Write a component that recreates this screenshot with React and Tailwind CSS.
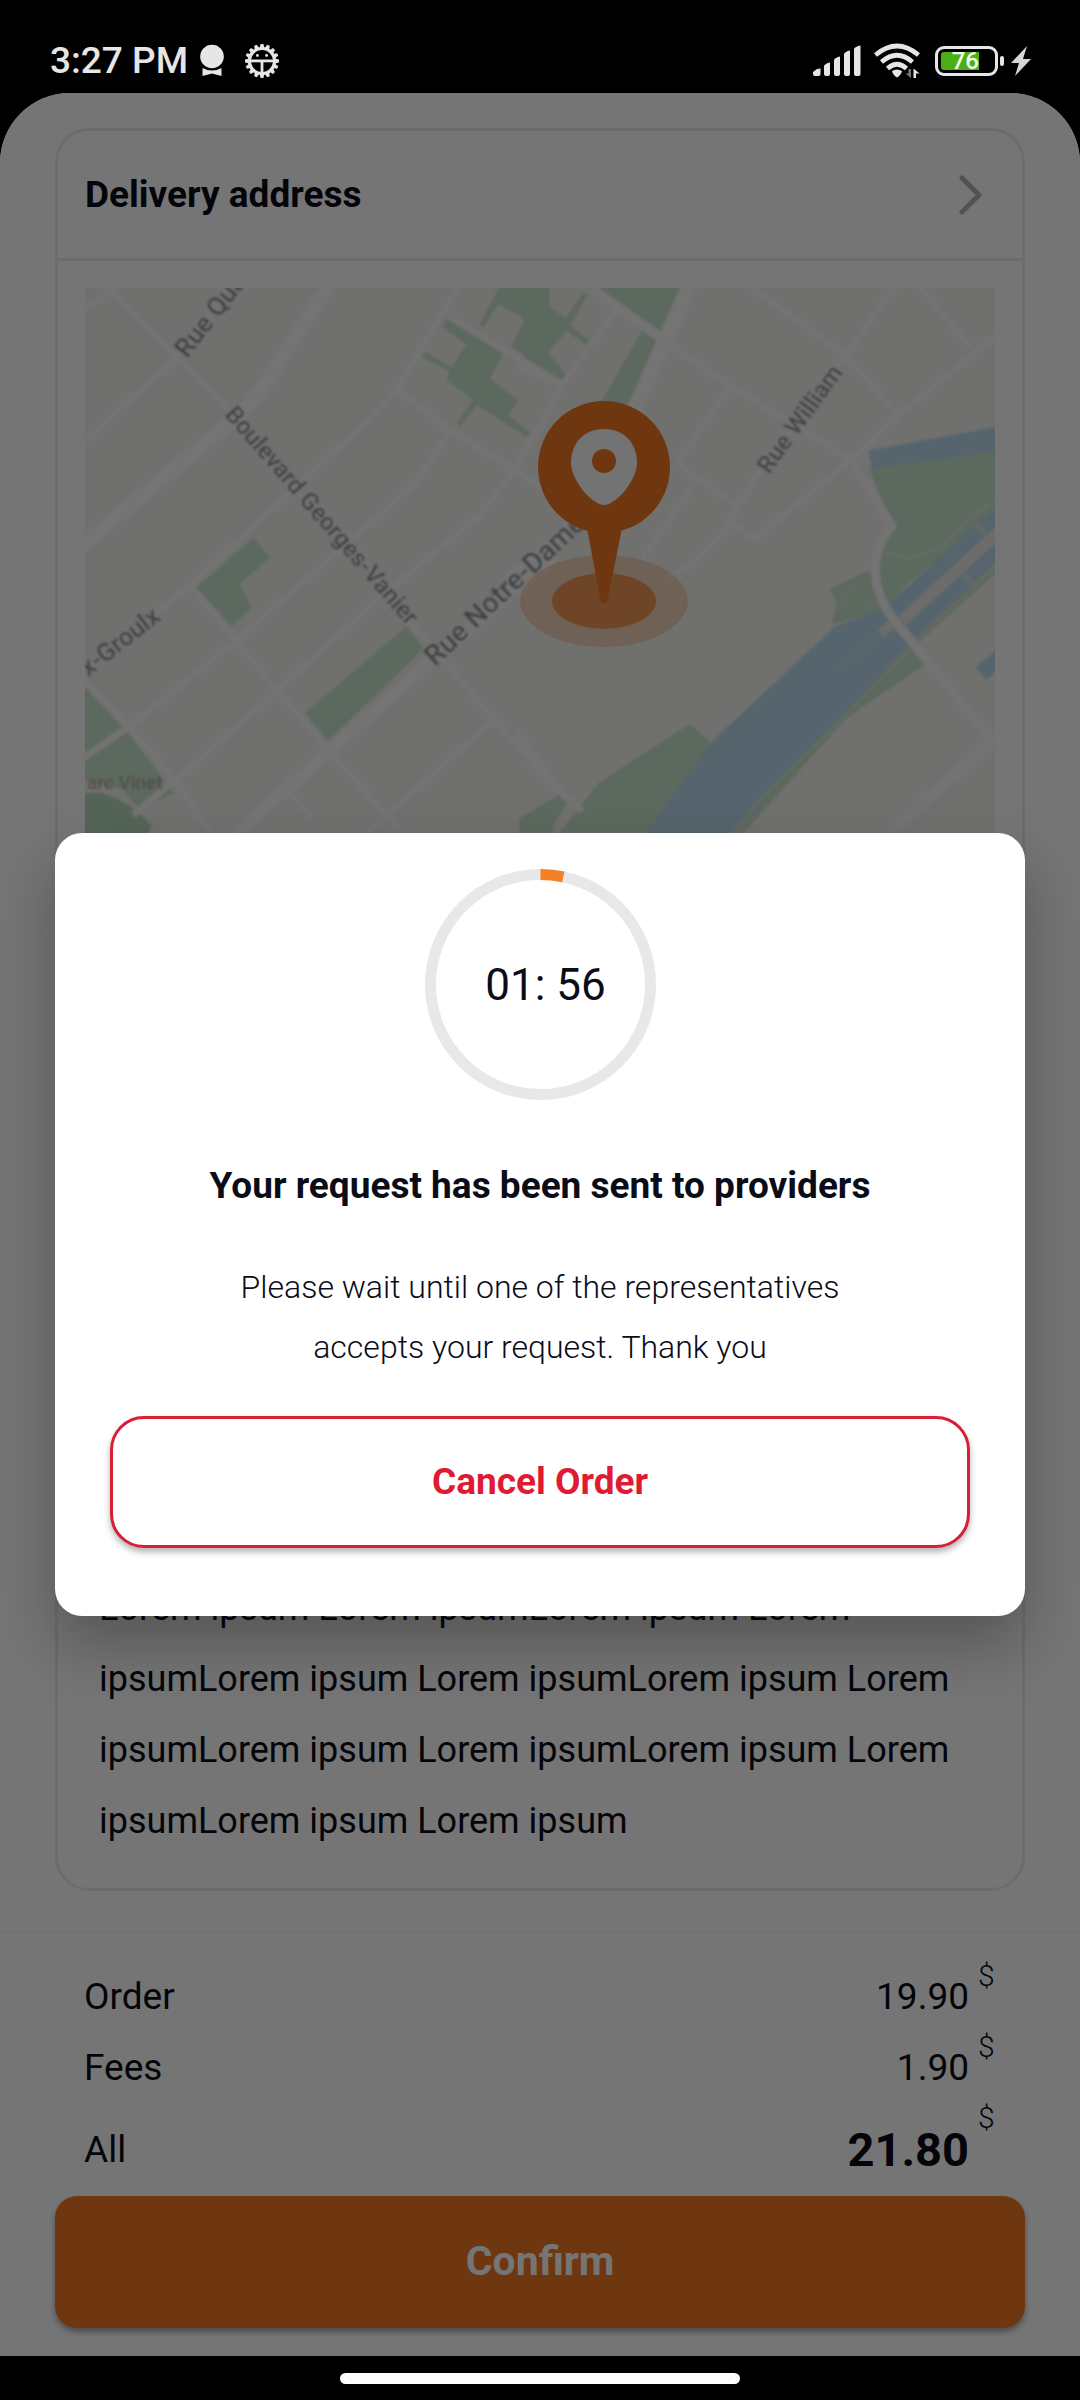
import React from "react";

const ROBOTO = "font-['Roboto','Liberation_Sans',sans-serif]";

function MedalIcon() {
  return (
    <svg width="24" height="34" viewBox="0 0 24 34" fill="#e6e6e6" aria-hidden="true">
      <circle cx="12" cy="12.500" r="11.800" />
      <path d="M2.500 24 Q12 29 21.500 24 V32 L12 29.500 L2.500 32 Z" />
    </svg>
  );
}

function GearBugIcon() {
  const teeth = Array.from({ length: 16 }, (_, i) => i * 22.5);
  return (
    <svg width="34" height="36" viewBox="-17 -18 34 36" fill="#e6e6e6" aria-hidden="true">
      {teeth.map((a) => (
        <path key={a} d="M-2.500 12.500 L-1.400 17 H1.400 L2.500 12.500 Z" transform={`rotate(${a})`} />
      ))}
      <circle r="12.500" fill="none" stroke="#e6e6e6" strokeWidth="3.200" />
      <rect x="-13" y="-1.500" width="26" height="2.800" />
      <rect x="-1.400" y="0" width="2.800" height="14" />
      <circle cx="-4.600" cy="-5.500" r="1.400" />
      <circle cx="4.600" cy="-5.500" r="1.400" />
    </svg>
  );
}

function SignalIcon() {
  return (
    <svg width="48" height="32" viewBox="0 0 48 32" fill="#e6e6e6" aria-hidden="true">
      <path d="M0 27 L4 24 L7.500 23.500 V29 Q7.500 31 5.500 31 H2 Q0 31 0 29 Z" />
      <path d="M11 21 Q12 18.500 17 17.500 V29 Q17 31 15 31 H13 Q11 31 11 29 Z" />
      <path d="M21 15 Q22 12.500 27 11.500 V29 Q27 31 25 31 H23 Q21 31 21 29 Z" />
      <path d="M31 9 Q32 6.500 37 5.500 V29 Q37 31 35 31 H33 Q31 31 31 29 Z" />
      <path d="M41 4 Q42 1.500 47.500 0.500 V29 Q47.500 31 45.500 31 H43 Q41 31 41 29 Z" />
    </svg>
  );
}

function WifiIcon() {
  return (
    <svg width="46" height="36" viewBox="0 0 46 36" fill="none" aria-hidden="true">
      <g stroke="#e6e6e6" strokeWidth="4.600">
        <path d="M1.500 12 Q23 -6 44.500 12" />
        <path d="M7.500 19 Q23 5.500 38.500 19" />
        <path d="M13.500 25.500 Q23 17 32.500 25.500" />
      </g>
      <path d="M18 28 Q23 25 28 28 Q27 32 23 34.500 Q19 32 18 28 Z" fill="#e6e6e6" />
      <path d="M37 26 V35 L31.500 30.500 H34.500 V26 Z" fill="#777" />
      <path d="M39.500 35 V25.500 L45.500 30.500 H42 V35 Z" fill="#e6e6e6" />
    </svg>
  );
}

function StatusBar() {
  return (
    <header className="flex h-[93px] shrink-0 items-end justify-between pr-[49px] pb-3 pl-[50px]">
      <div className="flex items-center">
        <span className="text-[37px] leading-[40px] font-medium text-[#e6e6e6]">3:27 PM</span>
        <span className="ml-[12px]">
          <MedalIcon />
        </span>
        <span className="ml-[21px]">
          <GearBugIcon />
        </span>
      </div>
      <div className="flex h-[40px] items-center">
        <SignalIcon />
        <span className="ml-[13px]">
          <WifiIcon />
        </span>
        <div className="ml-[15px] flex h-[30px] w-[63px] rounded-[9px] border-[3px] border-[#e6e6e6] p-[3px]">
          <div className="flex h-full w-[38px] items-center justify-end rounded-l-[3px] bg-[#4caf14] text-[24px] leading-none font-medium text-[#f0ffe8]">
            76
          </div>
        </div>
        <div className="ml-[2px] h-[10px] w-[4px] rounded-[2px] bg-[#e6e6e6]" />
        <svg className="ml-[7px]" width="20" height="30" viewBox="0 0 20 30" aria-hidden="true">
          <path d="M16 0 L0 17 H8 L4 30 L20 13 H12 Z" fill="#d6d6d6" />
        </svg>
      </div>
    </header>
  );
}

function MapPicture() {
  return (
    <svg
      className="block w-full"
      viewBox="85 288 910 560"
      role="img"
      aria-label="Map of the delivery address"
    >
      <defs>
        <filter id="soft" x="0" y="0" width="100%" height="100%">
          <feGaussianBlur stdDeviation="1.300" />
        </filter>
      </defs>
      <rect x="85" y="288" width="910" height="560" fill="#f4f3ef" />
      <g filter="url(#soft)">
        <rect x="60" y="260" width="960" height="600" fill="#f4f3ef" />

        {/* west side: parks and streets */}
        <g transform="matrix(.3333 0 0 .37 50 260)">
          <g fill="#c8e4cc">
            <path d="M610 750 L660 805 L570 875 L605 940 L545 990 L440 885 Z" />
            <path d="M1070 990 L1120 1050 L835 1300 L765 1225 Z" />
            <path d="M60 1110 L105 1155 L240 1285 L370 1440 L270 1485 L215 1430 L60 1400 Z" />
            <path d="M60 1440 H150 Q240 1460 305 1530 L270 1600 H60 Z" fill="#b8dcc0" />
            <path d="M1190 150 L1360 250 L1320 320 L1405 380 L1375 420 L1440 465 L1430 478 L1280 392 L1230 452 L1222 440 L1268 378 L1190 325 L1198 300 L1116 262 L1124 248 L1205 290 L1250 228 L1178 182 Z" />
            <path d="M1350 70 H1500 V302 L1385 235 L1425 160 L1345 118 L1300 182 L1288 176 Z" />
            <path d="M1510 1465 L1380 1568 L1340 1600 H1510 Z" />
          </g>
          <g fill="none" stroke="#fcfcfc" strokeWidth="44" strokeLinejoin="round">
            <path d="M40 810 L105 765 L540 440 Q620 380 680 285 L850 50" />
            <path d="M500 1600 L840 1325 L1150 1080 L1510 800" strokeWidth="38" />
          </g>
          <g fill="none" stroke="#fafafa" strokeWidth="20" strokeLinejoin="round">
            <path d="M60 160 L185 82 L530 400 L720 610 L900 760 L1090 990 L1190 1090 L1330 1240 L1530 1440" />
            <path d="M60 525 L380 265 L560 50" />
            <path d="M60 1140 L420 880 L700 645 L960 430 L1040 350 L1240 50" />
            <path d="M420 880 L560 1030 L680 1160 L840 1330 L1010 1500 L1100 1600" />
            <path d="M60 1370 L240 1260 L550 1035 L900 760 L1100 600 L1200 465" />
            <path d="M380 1405 L680 1165 L980 920 L1290 690 L1400 560 L1530 360" />
            <path d="M60 1095 L240 1265 L380 1410 L520 1600" />
            <path d="M1040 350 L1200 460 L1400 570 L1510 640" />
            <path d="M1190 148 L1510 325" />
            <path d="M930 1568 L1010 1500 L1330 1245" />
            <path d="M720 1440 L790 1510" />
            <path d="M250 1500 L380 1400" />
          </g>
        </g>

        {/* east side: canal, parks and streets */}
        <g transform="matrix(.3508 0 0 .37 530 260)">
          <g fill="#c8e4cc">
            <path d="M190 70 H430 L370 190 Z" />
            <path d="M320 190 L360 215 L280 390 L200 390 Z" />
            <path d="M-20 76 L102 158 L150 90 L162 96 L114 178 L170 218 L162 230 L104 192 L50 250 L105 312 L95 326 L-20 262 Z" />
            <path d="M965 560 L1360 510 V670 L1080 870 L1010 940 L985 790 L1035 725 Z" />
            <path d="M855 890 L1000 825 L1020 945 L860 985 L875 930 Z" />
            <path d="M455 1255 L515 1305 L330 1600 H40 L200 1410 Z" />
            <path d="M-30 1510 L90 1440 L110 1460 L20 1600 H-30 Z" />
            <path d="M1360 820 L1100 1040 L1130 1090 L900 1240 L590 1568 L520 1600 L1060 1040 L1360 800 Z" />
          </g>
          <g fill="#bbdced">
            <path d="M965 515 L1360 445 V515 L975 562 Z" />
            <path d="M290 1600 L520 1300 L870 990 L1000 945 L1360 645 V790 L1070 1050 L530 1600 Z" />
            <path d="M1270 1100 L1360 1030 V1085 L1300 1135 Z" />
          </g>
          <path d="M1360 800 L1120 1010 L1050 1085 L640 1475 L540 1600" fill="none" stroke="#dbe5d5" strokeWidth="9" />
          <g fill="none" stroke="#eeebe8">
            <path d="M1360 715 L1060 975" strokeWidth="32" />
            <path d="M1030 985 L1000 1010" strokeWidth="26" />
            <path d="M1000 1005 L885 1105" strokeWidth="9" stroke="#cfdde4" />
            <path d="M1270 710 L1300 740 M1230 845 L1275 885" strokeWidth="16" stroke="#d9e2e4" />
          </g>
          <path d="M1000 870 Q890 870 895 925 Q905 960 990 925" fill="none" stroke="#d5e8d4" strokeWidth="9" />
          <path d="M1000 790 L1090 805 L1160 780 L1270 690 L1360 620" fill="none" stroke="#d8e7d5" strokeWidth="12" />
          <path d="M460 60 L390 215 L300 400 L100 740 L-60 870" fill="none" stroke="#fcfcfc" strokeWidth="42" />
          <g fill="none" stroke="#fafafa" strokeWidth="30" strokeLinejoin="round">
            <path d="M915 540 L1032 720 Q980 770 985 850 Q990 930 1070 1010 L1310 1290" strokeWidth="26" />
            <path d="M1380 1250 L1020 1550" strokeWidth="36" />
            <path d="M170 76 L400 230" strokeWidth="26" />
          </g>
          <g fill="none" stroke="#fafafa" strokeWidth="20" strokeLinejoin="round">
            <path d="M610 60 L900 258 L1050 420" />
            <path d="M1055 50 L900 258 L640 590 L570 705 Q520 790 380 870" />
            <path d="M1090 50 L1260 240" />
            <path d="M1360 180 L1050 420 L915 540 L640 755 L565 705" />
            <path d="M400 230 L570 340 L780 460 L915 540" />
            <path d="M570 340 L420 550 L590 665" />
            <path d="M470 600 L320 810" />
            <path d="M250 130 L90 340 L-40 560" />
            <path d="M-40 1270 L90 1440 L150 1490" />
            <path d="M-40 290 L90 340" />
          </g>
        </g>

        <g className={ROBOTO} fontWeight="500" fill="#929295">
          <text x="187" y="359" fontSize="26" transform="rotate(-52 187 359)">Rue Qua</text>
          <text x="224" y="415" fontSize="24" transform="rotate(49 224 415)">Boulevard Georges-Vanier</text>
          <text x="435" y="667" fontSize="28" transform="rotate(-43 435 667)">Rue Notre-Dame</text>
          <text x="769" y="475" fontSize="24" transform="rotate(-54 769 475)">Rue William</text>
          <text x="88" y="677" fontSize="25" transform="rotate(-38 88 677)">x-Groulx</text>
          <text x="87" y="789" fontSize="19" fill="#b4a9a2">arc Vinet</text>
        </g>
      </g>

      {/* location pin */}
      <ellipse cx="604" cy="601" rx="84" ry="46" fill="#f27824" fillOpacity=".25" />
      <ellipse cx="604" cy="601" rx="52" ry="28" fill="#f27824" fillOpacity=".66" />
      <path d="M587 528 H622 L607 603 H601 Z" fill="#f27824" />
      <circle cx="604" cy="467" r="66" fill="#f27824" />
      <path
        d="M604 429 C624 429 637 443 637 463 C637 480 616 505 604 505 C592 505 571 480 571 463 C571 443 584 429 604 429 Z"
        fill="#fafafa"
      />
      <circle cx="604" cy="461" r="12" fill="#f27824" />
    </svg>
  );
}

function AddressCard() {
  return (
    <section className="flex flex-1 flex-col rounded-[34px] border-[3px] border-[#ececec]">
      <button
        type="button"
        className="flex h-[130px] items-center justify-between border-b-[3px] border-[#ececec] pr-[39px] pl-[27px] text-left"
      >
        <span className="text-[37px] leading-[48px] font-bold">Delivery address</span>
        <svg width="24" height="40" viewBox="0 0 24 40" fill="none" aria-hidden="true">
          <path
            d="M3 3 L20 20 L3 37"
            stroke="#b4b4b4"
            strokeWidth="5"
            strokeLinecap="round"
            strokeLinejoin="round"
          />
        </svg>
      </button>
      <div className="p-[27px]">
        <MapPicture />
      </div>
      <p className="mt-auto px-[41px] pb-[31px] text-[36px] leading-[71px]">
        Lorem ipsum Lorem ipsumLorem ipsum Lorem ipsumLorem ipsum Lorem ipsumLorem ipsum Lorem
        ipsumLorem ipsum Lorem ipsumLorem ipsum Lorem ipsumLorem ipsum Lorem ipsum
      </p>
    </section>
  );
}

function Amount({ children }) {
  return (
    <>
      {children}
      <sup className="top-0 ml-[9px] w-[18px] self-start text-[30px] leading-[30px] font-light">$</sup>
    </>
  );
}

function Summary() {
  return (
    <section className="border-t-2 border-[#f7f7f7] px-[55px] pt-7 pb-7">
      <dl className="px-[29px] text-[37px] leading-[48px]">
        <div className="flex h-[71px] items-center justify-between">
          <dt>Order</dt>
          <dd className="flex h-full items-center">
            <Amount>19.90</Amount>
          </dd>
        </div>
        <div className="flex h-[71px] items-center justify-between">
          <dt>Fees</dt>
          <dd className="flex h-full items-center">
            <Amount>1.90</Amount>
          </dd>
        </div>
        <div className="flex h-[93px] items-center justify-between">
          <dt>All</dt>
          <dd className="flex h-full items-center">
            <Amount>
              <span className="text-[47px] font-bold">21.80</span>
            </Amount>
          </dd>
        </div>
      </dl>
      <button
        type="button"
        className="h-[132px] w-full rounded-[22px] bg-[#f27824] text-[41px] font-bold text-white shadow-[0_4px_6px_rgba(0,0,0,0.35)]"
      >
        Confirm
      </button>
    </section>
  );
}

function CountdownRing() {
  return (
    <div className="relative mx-auto flex h-[231px] w-[231px] items-center justify-center">
      <svg className="absolute inset-0" viewBox="0 0 231 231" aria-hidden="true">
        <circle cx="115.500" cy="115.500" r="110" fill="none" stroke="#e8e8e8" strokeWidth="11" />
        <circle
          cx="115.500"
          cy="115.500"
          r="110"
          fill="none"
          stroke="#f57f26"
          strokeWidth="11"
          pathLength="120"
          strokeDasharray="4 116"
          transform="rotate(-90 115.500 115.500)"
        />
      </svg>
      <span className="relative text-[44px] leading-[48px] whitespace-pre" role="timer">
        {" 01: 56"}
      </span>
    </div>
  );
}

function RequestDialog() {
  return (
    <div className="absolute inset-0 flex items-center bg-black/54 px-[55px]">
      <div
        role="dialog"
        aria-modal="true"
        aria-labelledby="request-title"
        className="w-full rounded-[27px] bg-white px-[55px] pt-9 pb-[68px] text-center shadow-[0_30px_60px_rgba(0,0,0,0.26)]"
      >
        <CountdownRing />
        <h2 id="request-title" className="mt-[62px] text-[37px] leading-[48px] font-bold">
          Your request has been sent to providers
        </h2>
        <p className="mx-auto mt-[47px] max-w-[640px] text-[32px] leading-[60px] font-light">
          Please wait until one of the representatives accepts your request. Thank you
        </p>
        <button
          type="button"
          className="mt-[39px] h-[132px] w-full rounded-[34px] border-[3px] border-[#d81f35] bg-white text-[37px] font-bold text-[#e01a33] shadow-[0_4px_6px_rgba(0,0,0,0.3)]"
        >
          Cancel Order
        </button>
      </div>
    </div>
  );
}

export default function App() {
  return (
    <div className={`flex min-h-screen flex-col bg-black text-[#0a0c18] ${ROBOTO}`}>
      <StatusBar />
      <main className="relative flex flex-1 flex-col overflow-hidden rounded-t-[70px] bg-white">
        <div className="flex flex-1 flex-col px-[55px] pt-[35px] pb-10">
          <AddressCard />
        </div>
        <Summary />
        <RequestDialog />
      </main>
      <div className="flex h-11 shrink-0 items-center justify-center">
        <div className="h-[11px] w-[400px] rounded-full bg-white" />
      </div>
    </div>
  );
}
